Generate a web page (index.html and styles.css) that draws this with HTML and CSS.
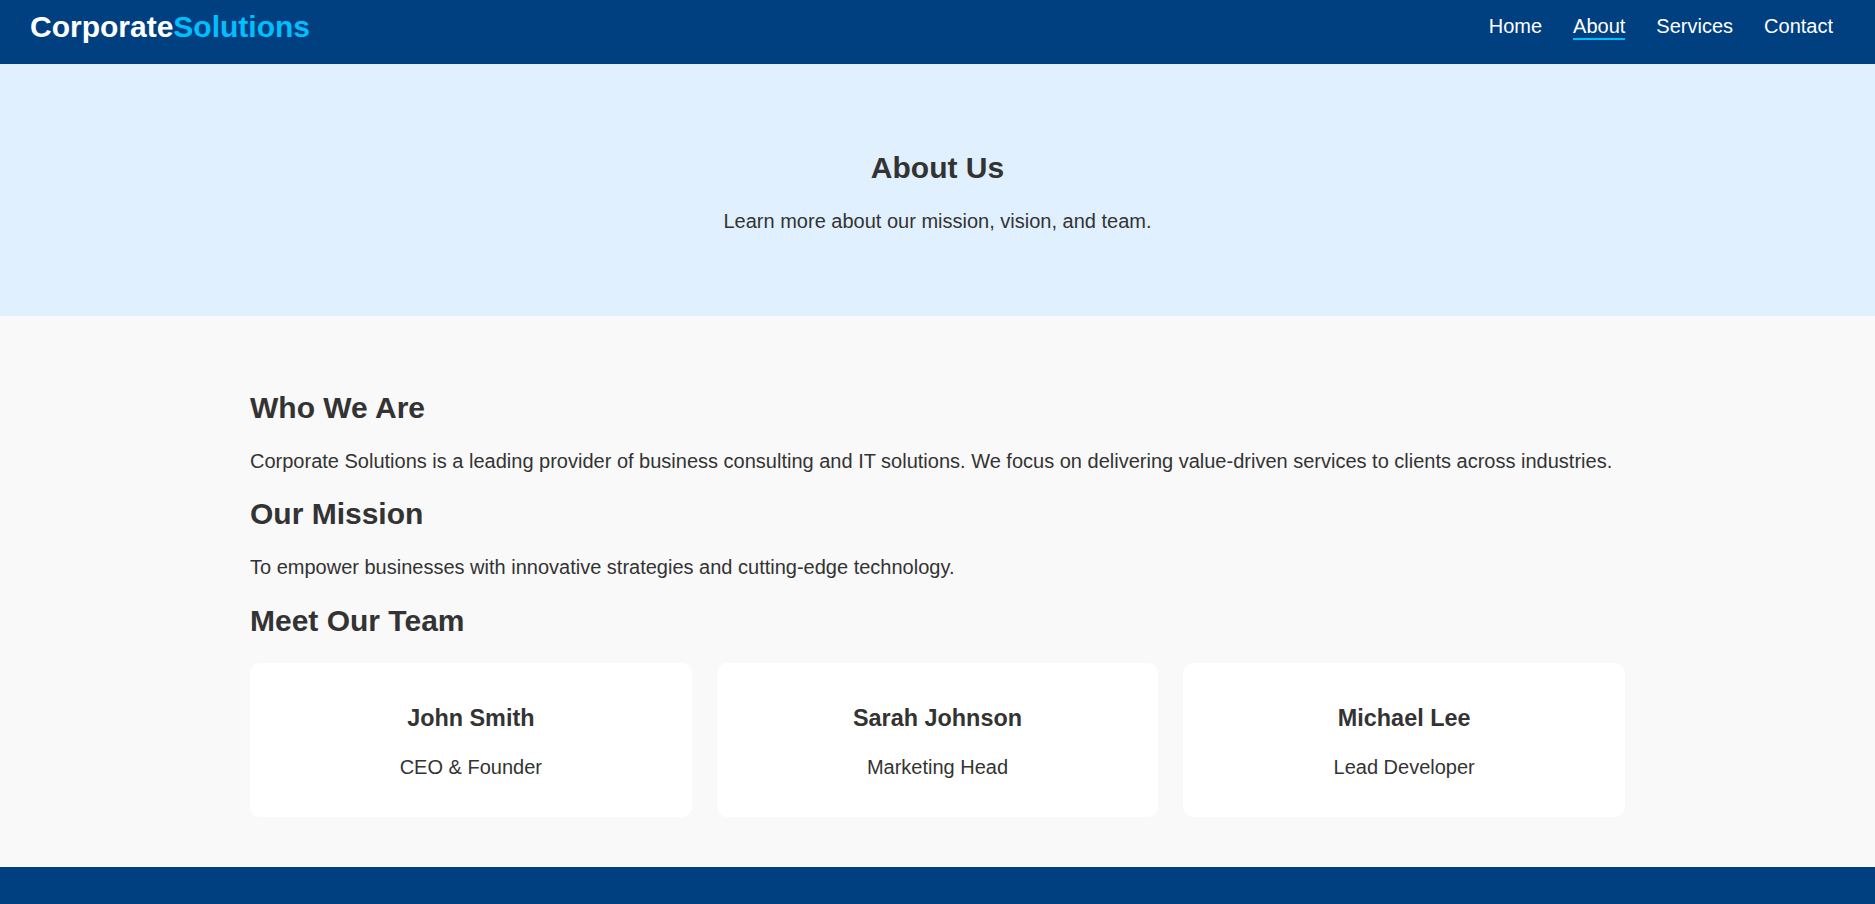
FILE: index.html
```html
<!DOCTYPE html>
<html lang="en">
<head>
<meta charset="utf-8">
<title>About Us - Corporate Solutions</title>
<link rel="stylesheet" href="styles.css">
</head>
<body>
<header class="site-header">
  <div class="logo">Corporate<span class="logo-accent">Solutions</span></div>
  <nav class="nav">
    <a class="nav-link" href="#">Home</a>
    <a class="nav-link active" href="#">About</a>
    <a class="nav-link" href="#">Services</a>
    <a class="nav-link" href="#">Contact</a>
  </nav>
</header>

<section class="hero">
  <h2 class="hero-title">About Us</h2>
  <p class="hero-sub">Learn more about our mission, vision, and team.</p>
</section>

<main class="main">
  <div class="container">
    <h2 class="section-title">Who We Are</h2>
    <p class="text">Corporate Solutions is a leading provider of business consulting and IT solutions. We focus on delivering value-driven services to clients across industries.</p>
    <h2 class="section-title">Our Mission</h2>
    <p class="text">To empower businesses with innovative strategies and cutting-edge technology.</p>
    <h2 class="section-title">Meet Our Team</h2>
    <div class="team">
      <div class="card">
        <h3 class="card-name">John Smith</h3>
        <p class="card-role">CEO &amp; Founder</p>
      </div>
      <div class="card">
        <h3 class="card-name">Sarah Johnson</h3>
        <p class="card-role">Marketing Head</p>
      </div>
      <div class="card">
        <h3 class="card-name">Michael Lee</h3>
        <p class="card-role">Lead Developer</p>
      </div>
    </div>
  </div>
</main>

<footer class="site-footer">
  <p class="footer-text">&copy; 2025 Corporate Solutions. All rights reserved.</p>
</footer>
</body>
</html>
```

FILE: styles.css
```css
* {
  box-sizing: border-box;
}

body {
  margin: 0;
  font-family: "Liberation Sans", Arial, sans-serif;
  font-size: 20px;
  color: #333;
  background: #f9f9f9;
}

.site-header {
  display: flex;
  justify-content: space-between;
  align-items: center;
  height: 64px;
  padding: 10px 42px 20px 30px;
  background: #004080;
}

.logo {
  font-size: 30px;
  font-weight: bold;
  color: #fff;
  line-height: normal;
}

.logo-accent {
  color: #00bfff;
}

.nav {
  display: flex;
  gap: 31px;
}

.nav-link {
  color: #fff;
  text-decoration: none;
  font-size: 20px;
  border-bottom: 2.5px solid transparent;
}

.nav-link.active {
  border-bottom-color: #00bfff;
}

.hero {
  background: #e0f0ff;
  text-align: center;
  padding: 62.5px 20px;
}

.hero-title {
  font-size: 30px;
  margin: 24.9px 0;
}

.hero-sub {
  font-size: 20px;
  margin: 20px 0;
}

.main {
  background: #f9f9f9;
  padding: 50px 0;
}

.container {
  max-width: 1375px;
  margin: 0 auto;
}

.section-title {
  font-size: 30px;
  margin: 24.9px 0;
}

.text {
  margin: 20px 0;
}

.team {
  display: grid;
  grid-template-columns: repeat(3, 1fr);
  gap: 25px;
}

.card {
  background: #fff;
  border-radius: 10px;
  padding: 18.75px;
  text-align: center;
}

.card-name {
  font-size: 23.4px;
  margin: 23.4px 0;
}

.card-role {
  margin: 20px 0;
}

.site-footer {
  background: #004080;
  color: #fff;
  text-align: center;
  padding: 70px 20px 40px;
}

.footer-text {
  margin: 0;
}
```
